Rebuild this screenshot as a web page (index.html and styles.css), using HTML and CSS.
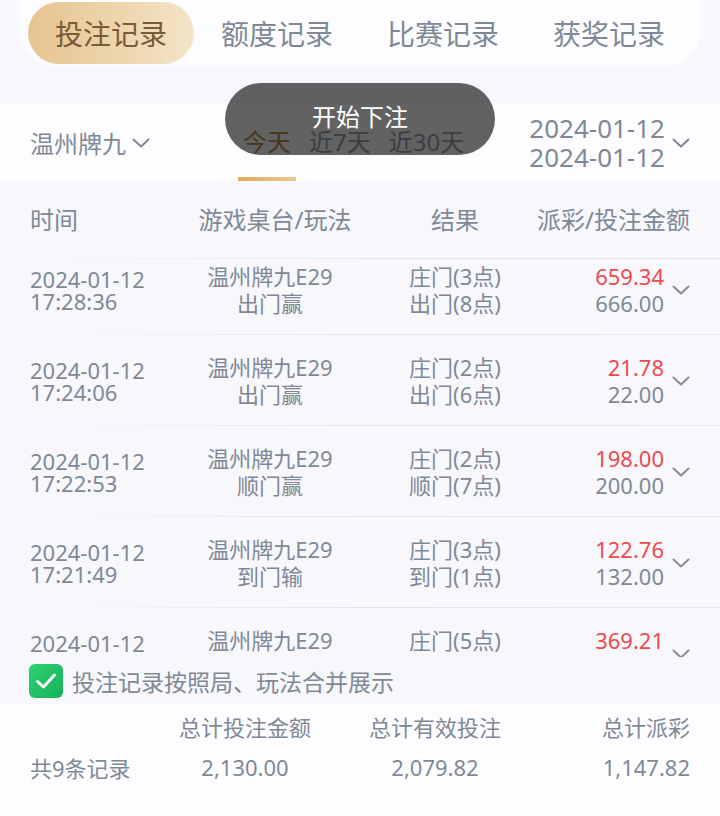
FILE: index.html
```html
<!DOCTYPE html>
<html>
<head>
    <title>投注记录</title>
    <link rel="stylesheet" href="styles.css">
</head>
<body>
    <div class="tabs">
        <div class="tab active">投注记录</div>
        <div class="tab">额度记录</div>
        <div class="tab">比赛记录</div>
        <div class="tab">获奖记录</div>
    </div>

    <div class="filter-bar">
        <div class="game-select">
            <span>温州牌九</span>
            <svg class="chev" width="18" height="10" viewBox="0 0 18 10"><path d="M1.5 1.5 L9 8.5 L16.5 1.5" /></svg>
        </div>
        <div class="periods">
            <div class="period active">今天</div>
            <div class="period">近7天</div>
            <div class="period">近30天</div>
        </div>
        <div class="date-range">
            <div class="dates">
                <div>2024-01-12</div>
                <div>2024-01-12</div>
            </div>
            <svg class="chev" width="18" height="10" viewBox="0 0 18 10"><path d="M1.5 1.5 L9 8.5 L16.5 1.5" /></svg>
        </div>
    </div>

    <!-- toast over the filter bar -->
    <div class="toast">开始下注</div>

    <div class="table-head">
        <div>时间</div>
        <div class="c-center head-game">游戏桌台/玩法</div>
        <div class="c-center">结果</div>
        <div class="c-right head-amount">派彩/投注金额</div>
    </div>

    <div class="record-list">
        <div class="record first">
            <div class="time"><div>2024-01-12</div><div>17:28:36</div></div>
            <div class="c-center"><div>温州牌九E29</div><div>出门赢</div></div>
            <div class="c-center"><div>庄门(3点)</div><div>出门(8点)</div></div>
            <div class="amounts">
                <div class="nums"><div class="payout">659.34</div><div>666.00</div></div>
                <svg class="chev dark" width="18" height="10" viewBox="0 0 18 10"><path d="M1.5 1.5 L9 8.5 L16.5 1.5" /></svg>
            </div>
        </div>
        <div class="record">
            <div class="time"><div>2024-01-12</div><div>17:24:06</div></div>
            <div class="c-center"><div>温州牌九E29</div><div>出门赢</div></div>
            <div class="c-center"><div>庄门(2点)</div><div>出门(6点)</div></div>
            <div class="amounts">
                <div class="nums"><div class="payout">21.78</div><div>22.00</div></div>
                <svg class="chev dark" width="18" height="10" viewBox="0 0 18 10"><path d="M1.5 1.5 L9 8.5 L16.5 1.5" /></svg>
            </div>
        </div>
        <div class="record">
            <div class="time"><div>2024-01-12</div><div>17:22:53</div></div>
            <div class="c-center"><div>温州牌九E29</div><div>顺门赢</div></div>
            <div class="c-center"><div>庄门(2点)</div><div>顺门(7点)</div></div>
            <div class="amounts">
                <div class="nums"><div class="payout">198.00</div><div>200.00</div></div>
                <svg class="chev dark" width="18" height="10" viewBox="0 0 18 10"><path d="M1.5 1.5 L9 8.5 L16.5 1.5" /></svg>
            </div>
        </div>
        <div class="record">
            <div class="time"><div>2024-01-12</div><div>17:21:49</div></div>
            <div class="c-center"><div>温州牌九E29</div><div>到门输</div></div>
            <div class="c-center"><div>庄门(3点)</div><div>到门(1点)</div></div>
            <div class="amounts">
                <div class="nums"><div class="payout">122.76</div><div>132.00</div></div>
                <svg class="chev dark" width="18" height="10" viewBox="0 0 18 10"><path d="M1.5 1.5 L9 8.5 L16.5 1.5" /></svg>
            </div>
        </div>
        <div class="record">
            <div class="time"><div>2024-01-12</div><div>17:20:35</div></div>
            <div class="c-center"><div>温州牌九E29</div><div>到门赢</div></div>
            <div class="c-center"><div>庄门(5点)</div><div>到门(6点)</div></div>
            <div class="amounts">
                <div class="nums"><div class="payout">369.21</div><div>373.00</div></div>
                <svg class="chev dark" width="18" height="10" viewBox="0 0 18 10"><path d="M1.5 1.5 L9 8.5 L16.5 1.5" /></svg>
            </div>
        </div>
    </div>

    <label class="merge-option">
        <span class="checkbox">
            <svg width="22" height="18" viewBox="0 0 22 18"><path d="M2.5 9.5 L8.5 15 L19.5 3" /></svg>
        </span>
        <span>投注记录按照局、玩法合并展示</span>
    </label>

    <div class="summary">
        <div></div>
        <div class="c-center">总计投注金额</div>
        <div class="c-center">总计有效投注</div>
        <div class="c-right">总计派彩</div>
        <div>共9条记录</div>
        <div class="c-center">2,130.00</div>
        <div class="c-center">2,079.82</div>
        <div class="c-right">1,147.82</div>
    </div>
</body>
</html>
```

FILE: styles.css
```css
/* Page base */
body {
    margin: 0;
    background: #f7f7fc;
    font-family: "Noto Sans", "Noto Sans CJK SC", sans-serif;
    color: #7f8996;
    position: relative;
    height: 816px;
    overflow: hidden;
}

.c-center {
    text-align: center;
}

.c-right {
    text-align: right;
}

.chev {
    fill: none;
    stroke: #7f8996;
    stroke-width: 2;
    stroke-linecap: round;
    stroke-linejoin: round;
}

.chev.dark {
    stroke: #8c8c8c;
}

/* Top tabs */
.tabs {
    margin: -8px 20px 0;
    height: 75px;
    padding: 0 8px 3px;
    box-sizing: border-box;
    background: #fdfdff;
    border-radius: 0 0 36px 36px;
    display: flex;
    align-items: flex-end;
}

.tab {
    width: 166px;
    height: 62px;
    display: flex;
    align-items: center;
    justify-content: center;
    font-size: 28px;
    color: #7f8996;
    border-radius: 31px;
}

.tab.active {
    background: linear-gradient(90deg, #e5c48f, #f4e4c7);
    color: #7b5a37;
}

/* Game / period / date filter */
.filter-bar {
    margin-top: 37px;
    height: 77px;
    background: #fdfdff;
    display: flex;
    align-items: stretch;
    padding: 0 30px;
}

.game-select {
    width: 208px;
    display: flex;
    align-items: center;
    gap: 6px;
    font-size: 24px;
}

.periods {
    display: flex;
    gap: 8px;
}

.period {
    padding: 0 5px;
    display: flex;
    align-items: center;
    font-size: 24px;
    color: #959ea8;
    border-bottom: 4px solid transparent;
    box-sizing: border-box;
}

.period.active {
    color: #bd8c45;
    border-image: linear-gradient(90deg, #dcab5c, #ebc98f) 1;
}

.date-range {
    margin-left: auto;
    display: flex;
    align-items: center;
    gap: 7px;
}

.dates {
    font-size: 26px;
    line-height: 29px;
    text-align: right;
}

.toast {
    position: absolute;
    top: 83px;
    left: 225px;
    width: 270px;
    height: 72px;
    border-radius: 36px;
    background: rgba(0, 0, 0, 0.61);
    color: #fff;
    font-size: 24px;
    display: flex;
    justify-content: center;
    padding-top: 15px;
    box-sizing: border-box;
}

/* Records table */
.table-head,
.record {
    display: grid;
    grid-template-columns: 150px 180px 190px 1fr;
    padding: 0 30px;
}

.table-head {
    height: 77px;
    align-items: center;
    font-size: 24px;
    padding-bottom: 3px;
    box-sizing: border-box;
}

.head-game {
    padding-left: 10px;
}

.head-amount {
    margin-left: -40px;
    white-space: nowrap;
}

.record-list {
    height: 399px;
    overflow: hidden;
    background: linear-gradient(90deg, rgba(224, 224, 234, 0) 4%, #e3e3eb 55%) top / 100% 1px no-repeat;
}

.record {
    height: 91px;
    align-items: center;
    font-size: 22px;
    line-height: 27px;
    background: linear-gradient(90deg, rgba(224, 224, 234, 0) 8%, #e3e3eb 50%, #e6e6ee 100%) bottom / 100% 1px no-repeat;
}

.record.first {
    margin-top: -14px;
}

.record .time {
    line-height: 22px;
}

.amounts {
    display: flex;
    justify-content: flex-end;
    align-items: center;
    gap: 8px;
}

.nums {
    text-align: right;
}

.payout {
    color: #ef4a4c;
}

/* Merge checkbox */
.merge-option {
    height: 47px;
    display: flex;
    align-items: center;
    gap: 9px;
    padding-left: 29px;
    font-size: 23px;
}

.checkbox {
    width: 34px;
    height: 34px;
    border-radius: 6px;
    background: linear-gradient(135deg, #2fcf72, #16b35c);
    display: flex;
    align-items: center;
    justify-content: center;
}

.checkbox path {
    fill: none;
    stroke: #fff;
    stroke-width: 3;
    stroke-linecap: round;
    stroke-linejoin: round;
}

/* Totals footer */
.summary {
    background: #fdfdff;
    height: 112px;
    display: grid;
    grid-template-columns: 120px 190px 190px 1fr;
    grid-template-rows: 41px 41px;
    align-items: center;
    padding: 1px 30px 0;
    box-sizing: border-box;
    font-size: 22px;
}
```
